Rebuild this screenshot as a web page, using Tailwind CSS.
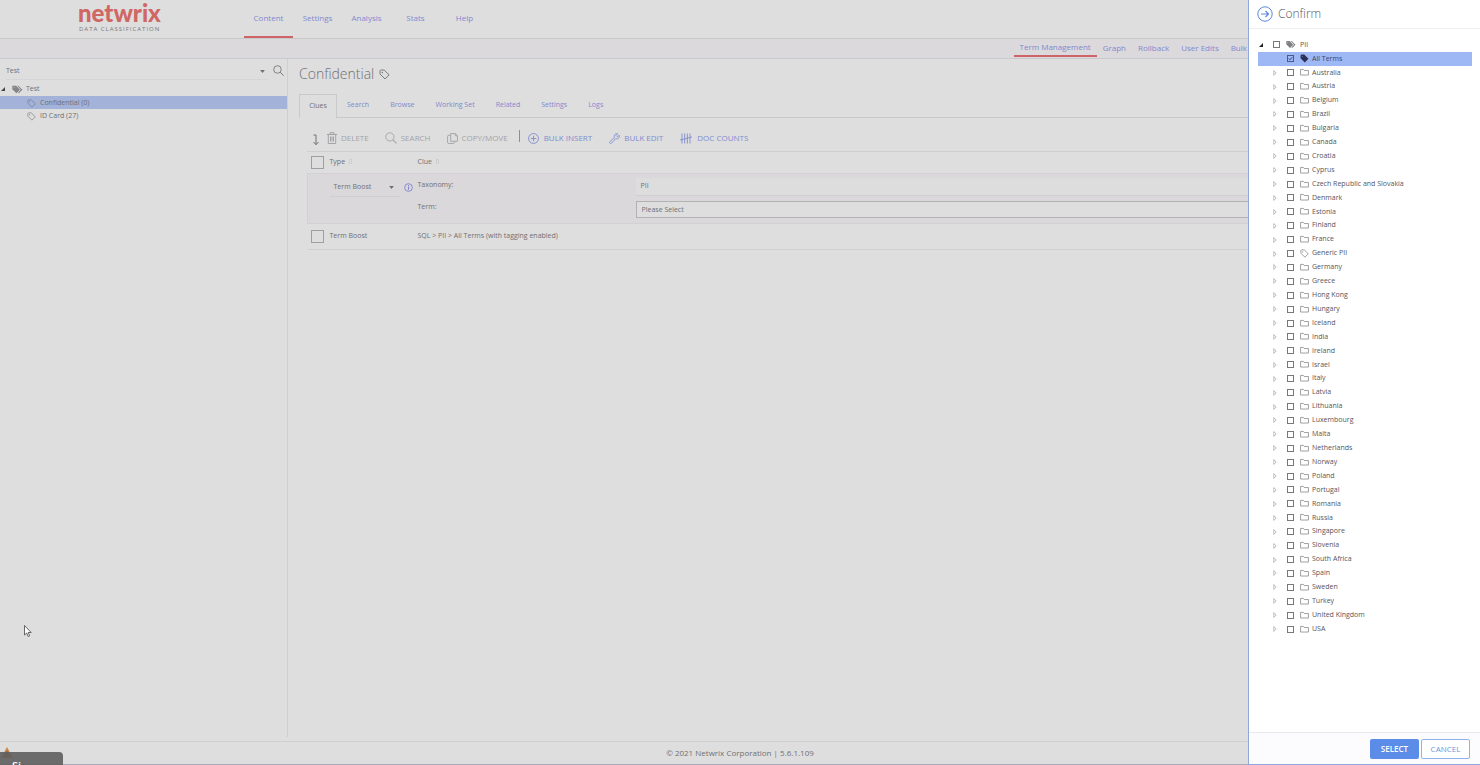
<!DOCTYPE html>
<html lang="en">
<head>
<meta charset="utf-8">
<title>Netwrix Data Classification</title>
<script src="https://cdn.jsdelivr.net/npm/@tailwindcss/browser@4"></script>
</head>
<body class="relative flex h-screen flex-col overflow-hidden bg-[#dedede] font-['Open_Sans',sans-serif] text-[7px] text-[#707074]">
<svg class="hidden" aria-hidden="true">
  <symbol id="tag" viewBox="0 0 16 16"><path d="M1.500 2.500v4.800l7.200 7.200 6-6-7.200-7H2.500z" fill="none" stroke="currentColor" stroke-width="1.300" stroke-linejoin="round"/><circle cx="4.800" cy="5" r="1" fill="currentColor"/></symbol>
  <symbol id="tag-solid" viewBox="0 0 16 16"><path fill="currentColor" fill-rule="evenodd" d="M1 2.500v5l7.500 7.500 6.500-6.500L7.500 1h-5zM4 3.200a.8.8 0 1 1 0 1.600.8.8 0 0 1 0-1.600z"/></symbol>
  <symbol id="tags" viewBox="0 0 20 16"><path fill="currentColor" fill-rule="evenodd" d="M.5 2v5.500l7.500 7.500 6.500-6.500L7.500 1h-6zM3.800 3.500a.9.9 0 1 1 0 1.800.9.900 0 0 1 0-1.800z"/><path fill="currentColor" d="M9.500 1h2l7.500 7.500-6.500 6.500-1.500-1.300 5-5.200z"/></symbol>
  <symbol id="folder" viewBox="0 0 16 14"><path d="M1 11.500v-10h5l1.500 2h7.500v8z" fill="none" stroke="currentColor" stroke-width="1.300" stroke-linejoin="round"/></symbol>
  <symbol id="search" viewBox="0 0 16 16"><circle cx="6.500" cy="6.500" r="5.500" fill="none" stroke="currentColor" stroke-width="1.200"/><path d="M10.500 10.500 15.300 15.300" stroke="currentColor" stroke-width="1.400"/></symbol>
  <symbol id="down" viewBox="0 0 8 5"><path d="M0 0h8L4 5z" fill="currentColor"/></symbol>
  <symbol id="open" viewBox="0 0 8 8"><path d="M8 0v8H0z" fill="currentColor"/></symbol>
  <symbol id="closed" viewBox="0 0 6 10"><path d="M1 1v8l4-4z" fill="none" stroke="currentColor"/></symbol>
</svg>

<header class="flex h-[39px] shrink-0 border-b border-[#c9c9cb]">
  <a href="#" class="ml-[78px] block w-[165px]" aria-label="netwrix data classification">
    <span class="block font-['Lato',sans-serif] text-[24px] leading-[26px] font-black text-[#cf6763]">netwrix</span>
    <span class="block pl-px text-[6px] leading-[7px] tracking-[1px] text-[#77777b]">DATA CLASSIFICATION</span>
  </a>
  <nav class="flex pl-px text-[8px] text-[#8388cf]">
    <a href="#" class="flex w-[49px] items-center justify-center border-b-2 border-[#cc6468]">Content</a>
    <a href="#" class="flex w-[49px] items-center justify-center border-b-2 border-transparent">Settings</a>
    <a href="#" class="flex w-[49px] items-center justify-center border-b-2 border-transparent">Analysis</a>
    <a href="#" class="flex w-[49px] items-center justify-center border-b-2 border-transparent">Stats</a>
    <a href="#" class="flex w-[49px] items-center justify-center border-b-2 border-transparent">Help</a>
  </nav>
</header>

<nav class="flex h-5 shrink-0 justify-end border-b border-[#c9c9cb] bg-[#dbd9dc] pr-[233px] pb-px text-[8px] text-[#8388cf]">
  <a href="#" class="flex items-center border-b-2 border-[#cc6468] px-[6px]">Term Management</a>
  <a href="#" class="flex items-center px-[6px]">Graph</a>
  <a href="#" class="flex items-center px-[6px]">Rollback</a>
  <a href="#" class="flex items-center px-[6px]">User Edits</a>
  <a href="#" class="flex items-center pl-[6px]">Bulk</a>
</nav>

<div class="flex min-h-0 flex-1">
  <aside class="mb-1 w-[288px] shrink-0 border-r border-[#cfcfd1]">
    <div class="flex h-[22px] items-center pl-[6px] pr-[3px]">
      <button class="flex h-[19px] flex-1 items-center justify-between border-b border-[#d5d5d7] pr-[2px] pt-1">Test<svg class="h-[3px] w-[5px]"><use href="#down"/></svg></button>
      <button aria-label="Search" class="pl-[6px]"><svg class="size-[11px]"><use href="#search"/></svg></button>
    </div>
    <ul>
      <li class="flex h-[15px] items-center pl-px pt-px"><svg class="size-1 text-[#444]"><use href="#open"/></svg><svg class="ml-[7px] mr-[3px] h-[9px] w-[11px] text-[#858589]"><use href="#tags"/></svg>Test</li>
      <li class="flex h-[13px] items-center bg-[#a2b2d8] pl-[27px] pt-px"><svg class="mr-1 size-[9px] text-[#7b8093]"><use href="#tag"/></svg>Confidential (0)</li>
      <li class="flex h-[14px] items-center pl-[27px] pt-px"><svg class="mr-1 size-[9px] text-[#858589]"><use href="#tag"/></svg>ID Card (27)</li>
    </ul>
  </aside>

  <main class="min-w-0 flex-1 pl-[11px]">
    <h1 class="flex h-[29px] items-center text-[14px] font-light">Confidential<svg class="ml-[5px] mt-[2px] size-[11px]"><use href="#tag"/></svg></h1>
    <nav class="mt-[6px] flex h-6 gap-[21px] border-b border-[#c9c9cb] text-[#8388cf]">
      <a href="#" class="-mr-[11px] -mb-px flex w-[38px] items-center justify-center border border-b-0 border-[#c9c9cb] bg-[#dedede] text-[#707074]">Clues</a>
      <a href="#" class="flex items-center">Search</a>
      <a href="#" class="flex items-center">Browse</a>
      <a href="#" class="flex items-center">Working Set</a>
      <a href="#" class="flex items-center">Related</a>
      <a href="#" class="flex items-center">Settings</a>
      <a href="#" class="flex items-center">Logs</a>
    </nav>
    <div class="ml-2 mt-[7px] flex h-[27px] items-center border-b border-[#cfcfd1] pl-[5px] text-[8px] text-[#a3a3a7]">
      <svg class="mr-[7px] mt-[3px] h-3 w-2 text-[#707074]" viewBox="0 0 8 12"><path d="M1.500 1h2.500v9.500M1.500 8 4 10.700 6.500 8" fill="none" stroke="currentColor"/></svg>
      <button class="mr-4 flex items-center gap-1"><svg class="h-3 w-[10px]" viewBox="0 0 10 12"><path d="M0 2.500h10M3 2V.7h4V2M1.300 2.500v9h7.400v-9M3.500 4.500v5M5 4.500v5M6.500 4.500v5" fill="none" stroke="currentColor"/></svg>DELETE</button>
      <button class="mr-4 flex items-center gap-1"><svg class="size-3"><use href="#search"/></svg>SEARCH</button>
      <button class="mr-[11px] flex items-center gap-1"><svg class="size-[11px]" viewBox="0 0 12 12"><path d="M4 .6h5L11.400 3v6H4zM9 .6V3h2.400M4 2.500H2A1.400 1.400 0 0 0 .6 4v6A1.400 1.400 0 0 0 2 11.400h5A1.400 1.400 0 0 0 8.300 10V9" fill="none" stroke="currentColor"/></svg>COPY/MOVE</button>
      <span class="mb-1 mr-2 h-3 w-px bg-[#8f8f93]"></span>
      <div class="flex items-center gap-[17px] text-[#7f8cd0]">
        <button class="flex items-center gap-[5px]"><svg class="size-[11px]" viewBox="0 0 12 12"><path d="M6 3v6M3 6h6" stroke="currentColor"/><circle cx="6" cy="6" r="5.400" fill="none" stroke="currentColor"/></svg>BULK INSERT</button>
        <button class="flex items-center gap-1"><svg class="size-[11px]" viewBox="0 0 12 12"><path d="M1 9.300 6 5A2.900 2.900 0 0 1 9.600 .9L7.800 2.700 9.300 4.200 11.100 2.400A2.900 2.900 0 0 1 7.200 6.200L2.800 11.100A1.200 1.200 0 0 1 1 9.300z" fill="none" stroke="currentColor" stroke-width=".9"/></svg>BULK EDIT</button>
        <button class="flex items-center gap-[5px]"><svg class="h-[11px] w-3" viewBox="0 0 12 11"><path d="M2 .5v10M4.700 .5v10M7.400 .5v10M10 .5v10M0 7 12 4" stroke="currentColor" stroke-width=".9" fill="none"/></svg>DOC COUNTS</button>
      </div>
    </div>
    <table class="ml-2 w-[calc(100%-8px)] table-fixed border-collapse text-left">
      <colgroup><col class="w-[22px]"><col class="w-[88px]"><col class="w-[218px]"><col></colgroup>
      <thead>
        <tr class="h-[21px]">
          <th class="pl-[3px]"><input type="checkbox" aria-label="Select all" class="block size-[13px] appearance-none border border-[#9f9fa3]"></th>
          <th class="font-normal">Type <span class="ml-[2px] inline-block h-[5px] w-[3px] border border-[#cfcfd1]"></span></th>
          <th class="font-normal">Clue <span class="ml-[2px] inline-block h-[5px] w-[3px] border border-[#cfcfd1]"></span></th>
          <th></th>
        </tr>
      </thead>
      <tbody>
        <tr class="h-[50px] border-y border-l border-[#d3d1d4] bg-[#dad8db] align-top">
          <td></td>
          <td>
            <div class="flex items-center pt-[5px]">
              <button class="flex h-[18px] w-[70px] items-center justify-between border-b border-[#cfcfd1] pl-1 pr-[6px]">Term Boost<svg class="h-[3px] w-[5px]"><use href="#down"/></svg></button>
              <svg class="ml-1 size-[9px] shrink-0 text-[#7f84cf]" viewBox="0 0 10 10"><circle cx="5" cy="5" r="4.300" fill="none" stroke="currentColor"/><path d="M5 4v3.500M5 2.300v1" stroke="currentColor" stroke-width="1.200"/></svg>
            </div>
          </td>
          <td>
            <div class="pt-[6px] leading-[10px]">Taxonomy:</div>
            <label for="term" class="block pt-3 leading-[10px]">Term:</label>
          </td>
          <td>
            <div class="mt-1 flex h-[18px] items-center border-b border-[#cfcfd1] bg-[#dddddd] pl-[5px] pt-px">PII</div>
            <input id="term" type="text" value="Please Select" class="mt-[5px] block h-[17px] w-full border border-[#b2b2b5] bg-[#dedede] pl-[5px]">
          </td>
        </tr>
        <tr class="h-[26px] border-b border-[#cfcfd1]">
          <td class="pl-[3px]"><input type="checkbox" aria-label="Select clue" class="block size-[13px] appearance-none border border-[#9f9fa3]"></td>
          <td>Term Boost</td>
          <td colspan="2">SQL &gt; PII &gt; All Terms (with tagging enabled)</td>
        </tr>
      </tbody>
    </table>
  </main>
</div>

<footer class="flex h-6 shrink-0 items-center justify-center border-y border-t-[#cfcfd1] border-b-[#a9a9bb] text-[8px]">© 2021 Netwrix Corporation | 5.6.1.109</footer>

<svg class="absolute bottom-[7px] left-[1px] h-[11px] w-3 text-[#c98649]" viewBox="0 0 12 11"><path d="M6 0 12 11H0z" fill="currentColor"/><path d="M6 4v3.500M6 8.500v1" stroke="#665" stroke-width="1.200"/></svg>
<div class="absolute bottom-0 left-0 h-[13px] w-[63px] overflow-hidden rounded-tr-[4px] bg-[#5e5e5e]/90 pl-3 pt-[7px] text-[11px] leading-[14px] font-semibold text-white">Si</div>
<svg class="absolute left-6 top-[625px] h-[12px] w-[8px]" viewBox="0 0 8 12"><path d="M.5.500v9.500l2.200-2 1.500 3.500 1.500-.7L4.200 7.500h3z" fill="#fff" stroke="#444" stroke-width=".8"/></svg>

<section role="dialog" aria-labelledby="dlg" class="absolute inset-y-0 right-0 flex w-[232px] flex-col border-b border-l border-[#8fa8dc] bg-white text-[#55555c]">
  <header class="flex h-[29px] shrink-0 items-center gap-[5px] border-b border-[#efeff2] pl-2">
    <button aria-label="Close"><svg class="size-4 text-[#5c86dd]" viewBox="0 0 16 16"><circle cx="8" cy="8" r="7.200" fill="none" stroke="currentColor"/><path d="M4 8h7.500M8.500 5l3 3-3 3" fill="none" stroke="currentColor" stroke-width="1.200"/></svg></button>
    <h2 id="dlg" class="text-[12px] leading-[20px] font-light">Confirm</h2>
  </header>
  <div class="flex-1 pt-[9px] pl-[9px] pr-2">
    <ul id="tree" class="grid h-[598px] auto-rows-fr"></ul>
  </div>
  <footer class="flex h-8 shrink-0 items-center justify-end gap-[2px] border-t border-[#e9e9ee] bg-[#fcfbfd] pr-[10px] text-[8px]">
    <button class="h-5 w-[49px] rounded-[2px] bg-[#5b8de8] font-semibold text-white">SELECT</button>
    <button class="h-5 w-[49px] rounded-[2px] border border-[#8fb0ee] bg-white text-[#6f94dd]">CANCEL</button>
  </footer>
</section>

<script>
const terms = ["Australia","Austria","Belgium","Brazil","Bulgaria","Canada","Croatia","Cyprus","Czech Republic and Slovakia","Denmark","Estonia","Finland","France","Generic PII","Germany","Greece","Hong Kong","Hungary","Iceland","India","Ireland","Israel","Italy","Latvia","Lithuania","Luxembourg","Malta","Netherlands","Norway","Poland","Portugal","Romania","Russia","Singapore","Slovenia","South Africa","Spain","Sweden","Turkey","United Kingdom","USA"];
const box = '<input type="checkbox" class="mr-[6px] size-[7px] shrink-0 appearance-none border border-[#77777d]">';
document.getElementById("tree").innerHTML =
  `<li class="flex items-center pl-px"><svg class="mr-[10px] size-1 text-[#222]"><use href="#open"/></svg><label class="flex items-center">${box}<svg class="mr-1 h-[9px] w-[10px] text-[#808084]"><use href="#tags"/></svg>PII</label></li>
   <li class="flex items-center bg-[#9db8f4] pl-[29px] text-[#3c4670]"><label class="flex items-center"><span class="relative mr-[6px] size-[7px]"><input type="checkbox" checked class="block size-[7px] appearance-none border border-[#4c5a88]"><svg class="absolute inset-0 size-[7px]" viewBox="0 0 7 7"><path d="M1.800 3.500 3 4.800 5.300 2.200" fill="none" stroke="currentColor"/></svg></span><svg class="mr-[3px] size-[9px] text-[#2b3055]"><use href="#tag-solid"/></svg>All Terms</label></li>` +
  terms.map(t => `<li class="flex items-center pl-[15px]"><svg class="mr-[10px] h-[6px] w-1 shrink-0 text-[#909094]"><use href="#closed"/></svg><label class="flex items-center whitespace-nowrap">${box}<svg class="mr-[3px] size-[9px] text-[#808084]"><use href="${t === "Generic PII" ? "#tag" : "#folder"}"/></svg>${t}</label></li>`).join("");
</script>
</body>
</html>
